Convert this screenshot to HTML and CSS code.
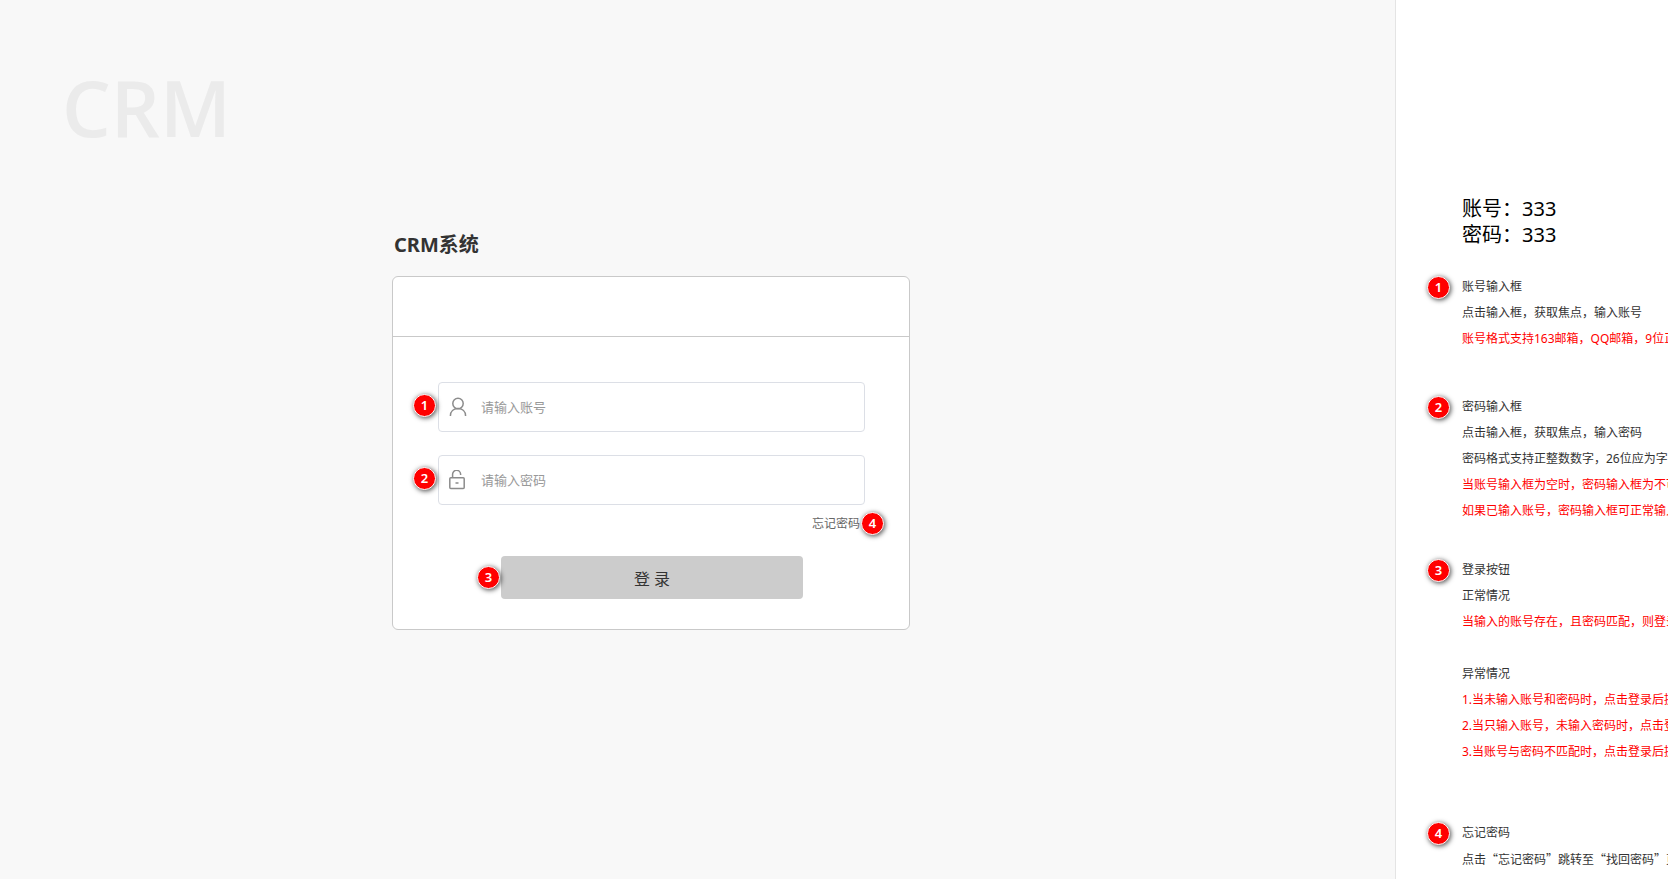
FILE: index.html
```html
<!DOCTYPE html>
<html lang="zh-CN">
<head>
    <meta charset="UTF-8">
    <meta name="viewport" content="width=device-width, initial-scale=1.0">
    <title>CRM系统</title>
    <link rel="stylesheet" href="styles.css">
</head>
<body>
    <main class="login-page">
        <div class="logo">CRM</div>

        <div class="login-box">
            <h1>CRM系统</h1>
            <form class="card">
                <div class="card-header"></div>
                <div class="card-body">
                    <div class="field">
                        <span class="badge">1</span>
                        <svg class="icon" viewBox="0 0 18 20" aria-hidden="true">
                            <circle cx="9" cy="6.5" r="5.2"/>
                            <path d="M1.4 19c0-4.6 3.2-7.4 7.6-7.4s7.6 2.8 7.6 7.4"/>
                        </svg>
                        <input type="text" id="account" aria-label="账号" placeholder="请输入账号">
                    </div>
                    <div class="field">
                        <span class="badge">2</span>
                        <svg class="icon" viewBox="0 0 18 20" aria-hidden="true">
                            <rect x="0.8" y="7.8" width="14.4" height="10.6" rx="1"/>
                            <path d="M3.6 7.8V4.6a4 4 0 0 1 8-0.6v1M6.5 13h3"/>
                        </svg>
                        <input type="password" id="password" aria-label="密码" placeholder="请输入密码">
                    </div>
                    <div class="forgot">
                        <a href="#">忘记密码</a>
                        <span class="badge">4</span>
                    </div>
                    <div class="submit">
                        <span class="badge">3</span>
                        <button type="submit">登 录</button>
                    </div>
                </div>
            </form>
        </div>
    </main>

    <aside class="notes">
        <div class="demo-account">
            <p>账号：333</p>
            <p>密码：333</p>
        </div>

        <section class="note">
            <span class="badge">1</span>
            <p>账号输入框</p>
            <p>点击输入框，获取焦点，输入账号</p>
            <p class="red">账号格式支持163邮箱，QQ邮箱，9位正</p>
        </section>

        <section class="note note-password">
            <span class="badge">2</span>
            <p>密码输入框</p>
            <p>点击输入框，获取焦点，输入密码</p>
            <p>密码格式支持正整数数字，26位应为字</p>
            <p class="red">当账号输入框为空时，密码输入框为不可</p>
            <p class="red">如果已输入账号，密码输入框可正常输入</p>
        </section>

        <section class="note note-login">
            <span class="badge">3</span>
            <p>登录按钮</p>
            <p>正常情况</p>
            <p class="red">当输入的账号存在，且密码匹配，则登录</p>
            <br>
            <p>异常情况</p>
            <p class="red">1.当未输入账号和密码时，点击登录后提</p>
            <p class="red">2.当只输入账号，未输入密码时，点击登</p>
            <p class="red">3.当账号与密码不匹配时，点击登录后提</p>
        </section>

        <section class="note">
            <span class="badge">4</span>
            <p>忘记密码</p>
            <p class="quoted">点击“忘记密码”跳转至“找回密码”页</p>
        </section>
    </aside>
</body>
</html>
```

FILE: styles.css
```css
* {
    margin: 0;
    padding: 0;
    box-sizing: border-box;
}
body {
    display: flex;
    height: 100vh;
    overflow: hidden;
    font-family: "Noto Sans", "Noto Sans CJK SC", sans-serif;
    font-size: 12px;
    color: #333;
    background-color: #fff;
}
.login-page {
    flex: 1;
    padding: 56px 62px;
    background-color: #f8f8f8;
    border-right: 1px solid #e4e4e4;
}
.logo {
    font-family: "Open Sans", sans-serif;
    font-size: 77px;
    line-height: 104px;
    font-weight: 600;
    color: #ebebeb;
}
.login-box {
    max-width: 518px;
    margin: 70px 0 0 330px;
}
h1 {
    padding-left: 2px;
    font-size: 20px;
    line-height: 30px;
    margin-bottom: 16px;
}
.card {
    background-color: #fff;
    border: 1px solid #c9c9c9;
    border-radius: 6px;
}
.card-header {
    height: 60px;
    border-bottom: 1px solid #c9c9c9;
}
.card-body {
    padding: 45px 44px 30px 45px;
}
.badge {
    position: absolute;
    width: 23px;
    height: 23px;
    border: 1px solid #fff;
    border-radius: 50%;
    background-color: #f00;
    box-shadow: 1px 1px 5px rgba(0, 0, 0, 0.7);
    color: #fff;
    font-size: 13px;
    font-weight: 600;
    line-height: 21px;
    text-align: center;
}
.field {
    position: relative;
    margin-bottom: 23px;
}
.field .badge {
    left: -25px;
    top: 12px;
}
.field input {
    display: block;
    width: 100%;
    height: 50px;
    padding-left: 42px;
    border: 1px solid #dcdfe6;
    border-radius: 4px;
    font-family: inherit;
    font-size: 13px;
    color: #333;
    outline: none;
}
.field input::placeholder {
    color: #999;
}
.icon {
    position: absolute;
    left: 11px;
    top: 15px;
    width: 18px;
    height: 20px;
    fill: none;
    stroke: #8c8c8c;
    stroke-width: 1.5;
}
.forgot {
    position: relative;
    margin-top: -17px;
    padding-right: 5px;
    line-height: 26px;
    text-align: right;
}
.forgot a {
    color: #666;
    text-decoration: none;
}
.forgot .badge {
    right: -19px;
    top: 1px;
}
.submit {
    position: relative;
    width: 302px;
    margin: 19px 0 0 63px;
}
.submit .badge {
    left: -24px;
    top: 10px;
}
.submit button {
    display: block;
    width: 100%;
    height: 43px;
    border: none;
    border-radius: 4px;
    background-color: #ccc;
    font-family: inherit;
    font-size: 16px;
    color: #333;
    cursor: pointer;
}
.notes {
    width: 272px;
    padding: 196px 0 0 66px;
    overflow: hidden;
    white-space: nowrap;
    line-height: 26px;
}
.demo-account {
    margin-bottom: 26px;
    font-size: 20px;
    color: #000;
}
.note {
    position: relative;
    margin-bottom: 42px;
}
.note .badge {
    left: -35px;
    top: 2px;
}
.note-password {
    margin-bottom: 33px;
}
.note-login {
    margin-bottom: 55px;
}
/* full-width quotes need the CJK font */
.quoted {
    font-family: "Noto Sans CJK SC", sans-serif;
}
.red {
    color: #f00;
}
```
